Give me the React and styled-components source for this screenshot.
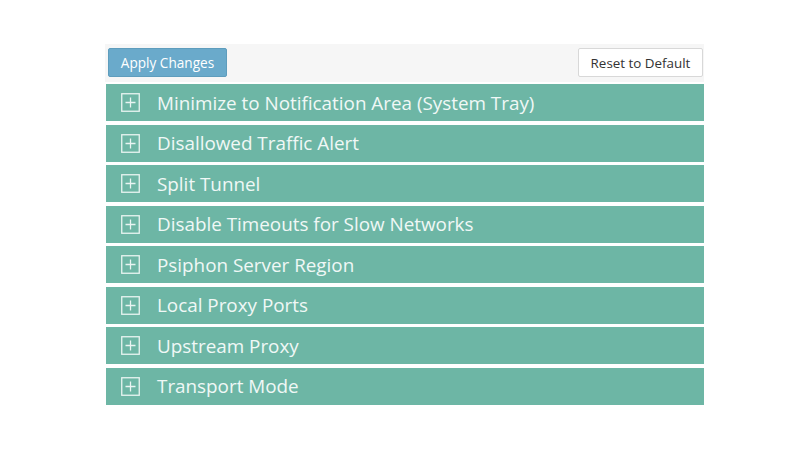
import React from 'react';
import styled, { createGlobalStyle } from 'styled-components';

const sections = [
  'Minimize to Notification Area (System Tray)',
  'Disallowed Traffic Alert',
  'Split Tunnel',
  'Disable Timeouts for Slow Networks',
  'Psiphon Server Region',
  'Local Proxy Ports',
  'Upstream Proxy',
  'Transport Mode',
];

const GlobalStyle = createGlobalStyle`
  html, body {
    margin: 0;
    padding: 0;
    background: #ffffff;
    font-family: "Open Sans", "Noto Sans", sans-serif;
  }
`;

const PlusBox = () => (
  <svg width="19" height="19" viewBox="0 0 19 19">
    <rect x="0.75" y="0.75" width="17.5" height="17.5" fill="none" stroke="rgba(255,255,255,0.85)" strokeWidth="1.3" />
    <path d="M9.5 4.5v10M4.5 9.5h10" stroke="rgba(255,255,255,0.85)" strokeWidth="1.3" />
  </svg>
);

const App = () => (
  <>
    <GlobalStyle />
    <Page>
      <Panel>
        <Toolbar>
          <ApplyButton>Apply Changes</ApplyButton>
          <ResetButton>Reset to Default</ResetButton>
        </Toolbar>
        <SectionList>
          {sections.map(title => (
            <SectionRow key={title}>
              <RowIcon><PlusBox /></RowIcon>
              <RowTitle>{title}</RowTitle>
            </SectionRow>
          ))}
        </SectionList>
      </Panel>
    </Page>
  </>
);

const Page = styled.div`
  width: 806px;
  height: 453px;
  padding: 44px 0 0 105px;
  box-sizing: border-box;
`;

const Panel = styled.div`
  width: 599px;
  display: flex;
  flex-direction: column;
`;

const Toolbar = styled.div`
  display: flex;
  justify-content: space-between;
  align-items: center;
  background: #f6f6f6;
  padding: 4px 1px 5px 3px;
  height: 38px;
  box-sizing: border-box;
`;

const ApplyButton = styled.button`
  height: 29px;
  width: 119px;
  background: #6aaacb;
  border: 1px solid #5e9dbd;
  border-radius: 2px;
  color: #ffffff;
  font-family: "Open Sans", "Noto Sans", sans-serif;
  font-size: 13.6px;
  padding: 0;
`;

const ResetButton = styled.button`
  height: 29px;
  width: 125px;
  background: #ffffff;
  border: 1px solid #d8d8d8;
  border-radius: 2px;
  color: #333333;
  font-family: "Open Sans", "Noto Sans", sans-serif;
  font-size: 13.4px;
  padding: 0;
`;

const SectionList = styled.div`
  display: flex;
  flex-direction: column;
  gap: 3.5px;
  margin-top: 2px;
`;

const SectionRow = styled.div`
  display: flex;
  align-items: center;
  height: 37px;
  margin-left: 1px;
  background: #6db6a5;
  padding-left: 15px;
`;

const RowIcon = styled.div`
  display: flex;
  width: 19px;
  height: 19px;
  margin-right: 17px;
`;

const RowTitle = styled.div`
  color: #f0f8f6;
  font-size: 18.85px;
  white-space: nowrap;
`;

export default App;
